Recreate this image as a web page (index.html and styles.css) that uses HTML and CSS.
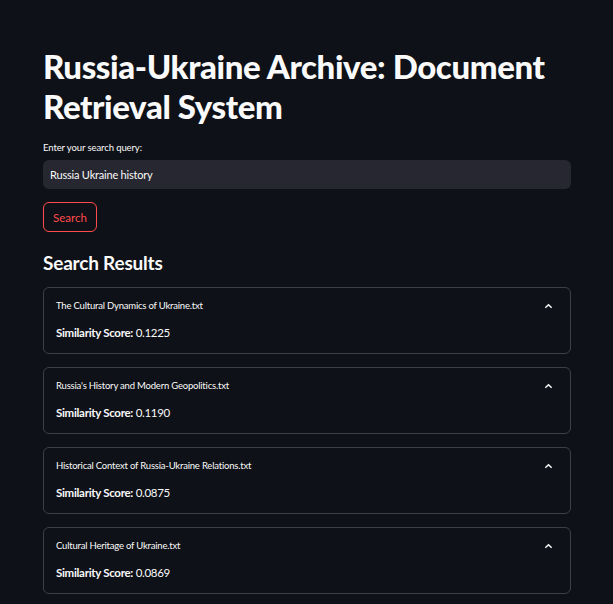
FILE: index.html
```html
<!DOCTYPE html>
<html>
<head>
<meta charset="utf-8">
<link rel="stylesheet" href="styles.css">
</head>
<body>
<main class="main">
  <h1 class="title">Russia-Ukraine Archive: Document Retrieval System</h1>
  <label class="label">Enter your search query:</label>
  <div class="input">Russia Ukraine history</div>
  <div class="btn-row"><button class="btn">Search</button></div>
  <h2 class="subtitle">Search Results</h2>
  <div class="results">
    <div class="exp">
      <div class="exp-head"><span>The Cultural Dynamics of Ukraine.txt</span><svg class="chev" viewBox="0 0 10 6"><polyline points="1.5,5 5,1.5 8.5,5"/></svg></div>
      <div class="score"><b>Similarity Score:</b> 0.1225</div>
    </div>
    <div class="exp">
      <div class="exp-head"><span>Russia's History and Modern Geopolitics.txt</span><svg class="chev" viewBox="0 0 10 6"><polyline points="1.5,5 5,1.5 8.5,5"/></svg></div>
      <div class="score"><b>Similarity Score:</b> 0.1190</div>
    </div>
    <div class="exp">
      <div class="exp-head"><span>Historical Context of Russia-Ukraine Relations.txt</span><svg class="chev" viewBox="0 0 10 6"><polyline points="1.5,5 5,1.5 8.5,5"/></svg></div>
      <div class="score"><b>Similarity Score:</b> 0.0875</div>
    </div>
    <div class="exp">
      <div class="exp-head"><span>Cultural Heritage of Ukraine.txt</span><svg class="chev" viewBox="0 0 10 6"><polyline points="1.5,5 5,1.5 8.5,5"/></svg></div>
      <div class="score"><b>Similarity Score:</b> 0.0869</div>
    </div>
  </div>
</main>
</body>
</html>
```
FILE: styles.css
```css
html, body {
  margin: 0;
  padding: 0;
  background: #0e1117;
  color: #fafafa;
  font-family: Lato, "Liberation Sans", sans-serif;
  overflow: hidden;
}
.main {
  display: flex;
  flex-direction: column;
  padding: 46px 42px 0 43px;
}
.title {
  margin: 0;
  font-size: 33px;
  font-weight: 900;
  line-height: 40px;
  letter-spacing: -0.4px;
}
.label {
  margin-top: 15px;
  font-size: 9.5px;
  line-height: 14px;
  letter-spacing: -0.1px;
}
.input {
  margin-top: 5px;
  height: 29px;
  box-sizing: border-box;
  background: #262730;
  border-radius: 6px;
  padding: 0 7px;
  display: flex;
  align-items: center;
  font-size: 11px;
  letter-spacing: -0.2px;
}
.btn-row {
  margin-top: 13px;
  display: flex;
}
.btn {
  height: 30px;
  width: 54px;
  padding: 0;
  background: transparent;
  border: 1px solid #ff4b4b;
  border-radius: 6px;
  color: #ff4b4b;
  font-family: inherit;
  font-size: 11.5px;
}
.subtitle {
  margin: 19px 0 0;
  font-size: 19px;
  line-height: 24px;
  font-weight: 700;
  letter-spacing: -0.2px;
}
.results {
  margin-top: 12px;
  display: flex;
  flex-direction: column;
  gap: 13px;
}
.exp {
  height: 67px;
  box-sizing: border-box;
  border: 1px solid rgba(250, 250, 250, 0.2);
  border-radius: 6px;
  padding: 0 12px;
}
.exp-head {
  height: 33px;
  display: flex;
  align-items: center;
  justify-content: space-between;
  font-size: 9.5px;
  letter-spacing: -0.2px;
  padding-top: 2px;
  box-sizing: border-box;
}
.chev {
  width: 9px;
  height: 6px;
  margin-right: 5px;
  fill: none;
  stroke: #fafafa;
  stroke-width: 1.6;
}
.score {
  font-size: 11.5px;
  line-height: 16px;
  margin-top: 4px;
  letter-spacing: -0.3px;
}
.score b {
  font-weight: 700;
}
```
